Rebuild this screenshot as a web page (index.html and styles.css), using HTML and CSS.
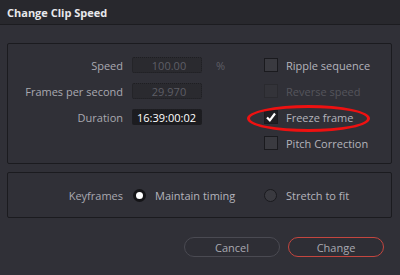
FILE: index.html
```html
<!DOCTYPE html>
<html>
<head>
  <title>Change Clip Speed</title>
  <link rel="stylesheet" href="styles.css">
</head>
<body>
  <div class="title-bar">Change Clip Speed</div>

  <div class="dialog">
    <div class="group speed-group">
      <label class="field-label">Speed</label>
      <input class="field" type="text" value="100.00" disabled>
      <span class="unit">%</span>
      <div class="check"><span class="box"></span>Ripple sequence</div>

      <label class="field-label">Frames per second</label>
      <input class="field" type="text" value="29.970" disabled>
      <span></span>
      <div class="check disabled"><span class="box"></span>Reverse speed</div>

      <label class="field-label">Duration</label>
      <input class="field active" type="text" value="16:39:00:02">
      <span></span>
      <div class="check marked">
        <span class="box checked">
          <svg width="12" height="12" viewBox="0 0 12 12"><path d="M2 6.5 L4.8 9.3 L10 2.5" fill="none" stroke="#fff" stroke-width="2.2"/></svg>
        </span>Freeze frame
        <span class="highlight"></span>
      </div>

      <span></span>
      <span></span>
      <span></span>
      <div class="check"><span class="box"></span>Pitch Correction</div>
    </div>

    <div class="group keyframe-group">
      <span class="field-label">Keyframes</span>
      <div class="radio-option first"><span class="radio selected"></span>Maintain timing</div>
      <div class="radio-option"><span class="radio"></span>Stretch to fit</div>
    </div>

    <div class="button-row">
      <button class="btn">Cancel</button>
      <button class="btn primary">Change</button>
    </div>
  </div>
</body>
</html>
```

FILE: styles.css
```css
body {
  margin: 0;
  background-color: #303037;
  font-family: "Open Sans", "Liberation Sans", sans-serif;
  font-size: 11px;
  color: #a9a9b1;
  width: 400px;
  height: 275px;
  overflow: hidden;
}

.title-bar {
  height: 24px;
  line-height: 25px;
  padding-left: 7px;
  background-color: #28282d;
  border-bottom: 1px solid #1c1c20;
  color: #e8e8ec;
  font-weight: bold;
  font-size: 11px;
}

.dialog {
  padding: 18px 8px 0 7px;
}

.group {
  border: 1px solid #1b1b1f;
  border-radius: 2px;
}

.speed-group {
  box-sizing: border-box;
  height: 121px;
  padding-top: 13px;
  display: grid;
  grid-template-columns: 124px 70px 62px auto;
  grid-auto-rows: 16px;
  row-gap: 10px;
  align-items: center;
}

.field-label {
  text-align: right;
  padding-right: 9px;
}

.field {
  width: 70px;
  height: 16px;
  box-sizing: border-box;
  margin: 0;
  padding: 0 0 0 4px;
  border: 1px dotted #1e1e22;
  background-color: #2a2a2f;
  color: #5e5e66;
  font-family: "Open Sans", "Liberation Sans", sans-serif;
  font-size: 11px;
  text-align: center;
  border-radius: 2px;
}

.field.active {
  background-color: #1c1c20;
  color: #ffffff;
  text-align: left;
  padding-left: 4px;
}

.unit {
  padding-left: 14px;
  color: #5e5e66;
}

.check {
  position: relative;
  display: flex;
  align-items: center;
  gap: 8px;
  color: #b4b4bc;
}

.check.disabled {
  color: #55555c;
}

.box {
  width: 14px;
  height: 14px;
  box-sizing: border-box;
  border: 1px solid #1a1a1e;
  background-color: #3a3a40;
  display: flex;
  align-items: center;
  justify-content: center;
}

.check.disabled .box {
  background-color: #333339;
  border-color: #2a2a2f;
}

.box.checked {
  background-color: #1e1e22;
}

.highlight {
  position: absolute;
  left: -17px;
  top: -5px;
  width: 117px;
  height: 21px;
  border: 3px solid #ee1111;
  border-radius: 50%;
}

.keyframe-group {
  margin-top: 8px;
  height: 46px;
  box-sizing: border-box;
  display: flex;
  align-items: center;
}

.keyframe-group .field-label {
  width: 124px;
  box-sizing: border-box;
}

.radio-option {
  display: flex;
  align-items: center;
  gap: 9px;
  color: #b4b4bc;
}

.radio-option.first {
  width: 132px;
  padding-left: 1px;
  box-sizing: border-box;
}

.radio {
  width: 13px;
  height: 13px;
  box-sizing: border-box;
  border-radius: 50%;
  border: 1px solid #1a1a1e;
  background-color: #3a3a40;
}

.radio.selected {
  background-color: #ffffff;
  border: 3px solid #141417;
}

.button-row {
  display: flex;
  justify-content: flex-end;
  gap: 8px;
  margin-top: 19px;
  padding-right: 8px;
}

.btn {
  width: 96px;
  height: 20px;
  border-radius: 10px;
  border: 1px solid #4a4a52;
  background-color: #2e2e35;
  color: #a9a9b1;
  font-family: "Open Sans", "Liberation Sans", sans-serif;
  font-size: 11px;
  padding: 0;
}

.btn.primary {
  border-color: #c4463f;
}
```
